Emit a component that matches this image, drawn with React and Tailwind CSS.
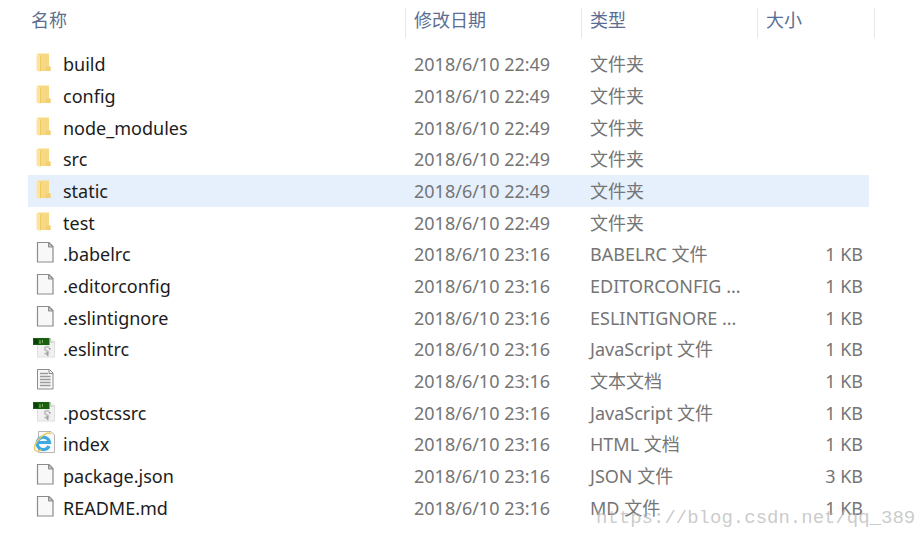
const FILES = [
  { icon: 'folder', name: 'build', date: '2018/6/10 22:49', type: '文件夹', size: '' },
  { icon: 'folder', name: 'config', date: '2018/6/10 22:49', type: '文件夹', size: '' },
  { icon: 'folder', name: 'node_modules', date: '2018/6/10 22:49', type: '文件夹', size: '' },
  { icon: 'folder', name: 'src', date: '2018/6/10 22:49', type: '文件夹', size: '' },
  { icon: 'folder', name: 'static', date: '2018/6/10 22:49', type: '文件夹', size: '', active: true },
  { icon: 'folder', name: 'test', date: '2018/6/10 22:49', type: '文件夹', size: '' },
  { icon: 'blank', name: '.babelrc', date: '2018/6/10 23:16', type: 'BABELRC 文件', size: '1 KB' },
  { icon: 'blank', name: '.editorconfig', date: '2018/6/10 23:16', type: 'EDITORCONFIG ...', size: '1 KB' },
  { icon: 'blank', name: '.eslintignore', date: '2018/6/10 23:16', type: 'ESLINTIGNORE ...', size: '1 KB' },
  { icon: 'script', name: '.eslintrc', date: '2018/6/10 23:16', type: 'JavaScript 文件', size: '1 KB' },
  { icon: 'text', name: '', date: '2018/6/10 23:16', type: '文本文档', size: '1 KB' },
  { icon: 'script', name: '.postcssrc', date: '2018/6/10 23:16', type: 'JavaScript 文件', size: '1 KB' },
  { icon: 'html', name: 'index', date: '2018/6/10 23:16', type: 'HTML 文档', size: '1 KB' },
  { icon: 'blank', name: 'package.json', date: '2018/6/10 23:16', type: 'JSON 文件', size: '3 KB' },
  { icon: 'blank', name: 'README.md', date: '2018/6/10 23:16', type: 'MD 文件', size: '1 KB' },
]

function FolderIcon() {
  return (
    <>
      <path d="M5 3.5h11V16l1.500 1v4H5z" fill="#f7d983" />
      <path d="M3.500 4l4 1.500V22l-4-1.500z" fill="#fae3a6" />
      <path d="M7.500 5.500V21" stroke="#f0c95f" strokeWidth="1" />
      <path d="M12.500 16.500h5V21h-5z" fill="#f3cf74" />
    </>
  )
}

function BlankIcon() {
  return (
    <>
      <path d="M4.500 2.500h11.500l4 4v15.500h-15.500z" fill="#f8f8f8" stroke="#8c8c8c" strokeWidth="1.2" />
      <path d="M15.500 2.500v4.500h4.500z" fill="#c4c4c4" stroke="#8c8c8c" />
    </>
  )
}

function TextIcon() {
  return (
    <>
      <path d="M4.500 2.500h12l3.500 3.500v16h-15.500z" fill="#f6f6f6" stroke="#8c8c8c" />
      <path d="M16 2.500v4h4" fill="none" stroke="#8c8c8c" />
      <path d="M7 6.500h8M7 9.500h10.500M7 12.500h10.500M7 15.500h10.500M7 18.500h10.500" stroke="#9a9a9a" strokeWidth="1.3" />
    </>
  )
}

function ScriptIcon() {
  return (
    <>
      <path d="M4 2.500h14l4 4V22.500H4z" fill="#f1f1f1" />
      <path d="M17.500 3V7H21.500" fill="none" stroke="#c2c2c2" />
      <path d="M4.500 9v13h17V7" fill="none" stroke="#e0e0e0" />
      <path d="M0 3h16.500v7H0z" fill="#17600f" />
      <path d="M1 4h4v5H1z" fill="#0b4208" />
      <path d="M7 5v3M9.500 5v3M6 8h2" stroke="#7fa868" />
      <path d="M16 12c-2.500-1-5 .5-4 2.500s4 1 3.500 3-3 1.500-4 .5" fill="none" stroke="#c4c4c4" strokeWidth="2" />
      <path d="M14 17l1 4M16 13l1.500 1.500" stroke="#9c9c9c" strokeWidth="1.5" />
    </>
  )
}

function HtmlIcon() {
  return (
    <>
      <path d="M5.500 1.500h12.500l3.500 3.500v17.500h-16z" fill="#fafafa" stroke="#b5b5b5" />
      <path d="M16 16a6.200 6.200 0 1 1 .5-3.500H5" fill="none" stroke="#3fa9e2" strokeWidth="3.200" />
      <path d="M2.500 20.500c-3-3 1-9.500 5.500-13.500s8.500-5 10-3" fill="none" stroke="#ecca68" strokeWidth="1.600" />
      <path d="M2.500 20.500c1.500 1.200 4 .5 6-1" fill="none" stroke="#ecca68" strokeWidth="1.400" />
    </>
  )
}

const ICONS = {
  folder: FolderIcon,
  blank: BlankIcon,
  text: TextIcon,
  script: ScriptIcon,
  html: HtmlIcon,
}

function FileIcon({ type }) {
  const Shape = ICONS[type]
  return (
    <svg viewBox="0 0 24 24" className="mb-1 size-6 shrink-0" aria-hidden="true">
      <Shape />
    </svg>
  )
}

function FileRow({ file }) {
  const bg = file.active ? 'bg-[#e6f0fd]' : ''
  return (
    <tr className="h-8 nth-[3n]:h-[31px]">
      <td className={`pl-[5px] ${bg}`}>
        <div className="flex items-center gap-1.5 text-[#1c1c1c]">
          <FileIcon type={file.icon} />
          <span className="truncate">{file.name}</span>
        </div>
      </td>
      <td className={`pl-[9px] whitespace-nowrap ${bg}`}>{file.date}</td>
      <td className={`pl-[9px] whitespace-nowrap ${bg}`}>{file.type}</td>
      <td className={`pr-1.5 text-right whitespace-nowrap ${bg}`}>{file.size}</td>
    </tr>
  )
}

export default function App() {
  return (
    <main className="relative min-h-screen overflow-hidden bg-white pt-2 pr-10 pb-4 pl-7 font-['Noto_Sans','Noto_Sans_CJK_SC',sans-serif] text-[18px] leading-6 text-[#757575]">
      <table className="w-full table-fixed border-separate border-spacing-0">
        <thead>
          <tr className="h-[30px] text-left text-[#5b6e92] *:pb-1.5 *:font-normal">
            <th scope="col" className="pl-[3px]">名称</th>
            <th scope="col" className="w-44 border-l border-[#e4e8ec] pl-2">修改日期</th>
            <th scope="col" className="w-44 border-l border-[#e4e8ec] pl-2">类型</th>
            <th scope="col" className="w-28 border-l border-[#e4e8ec] pl-2">大小</th>
            <td className="w-1.5 border-r border-[#e4e8ec]"></td>
          </tr>
        </thead>
        <tbody className="before:block before:h-2.5">
          {FILES.map((file, i) => (
            <FileRow key={i} file={file} />
          ))}
        </tbody>
      </table>

      {/* Watermark */}
      <p className="absolute top-[506px] left-[596px] font-['Liberation_Mono',monospace] text-[19px] whitespace-nowrap text-[#b4b4b4]/70">
        https://blog.csdn.net/qq_389
      </p>
    </main>
  )
}
